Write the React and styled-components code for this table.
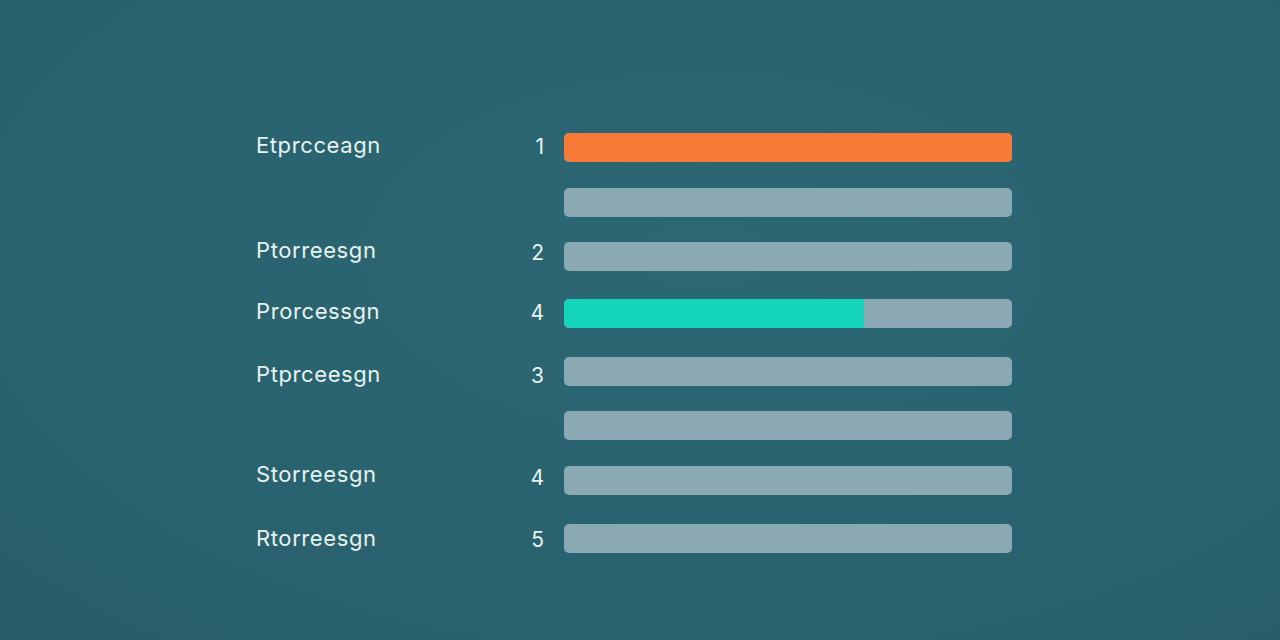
import React from 'react'
import styled, { createGlobalStyle } from 'styled-components'

const GlobalStyle = createGlobalStyle`
  html, body {
    margin: 0;
    padding: 0;
    background: #2a6370;
  }
`

// top = space above the row, dy / ndy = small vertical nudge of label / number
const rows = [
  { label: 'Etprcceagn', num: '1', fill: 100, color: '#f77b37', top: 0, dy: 0, ndy: 0 },
  { label: '', num: '', fill: 0, top: 26 },
  { label: 'Ptorreesgn', num: '2', fill: 0, top: 25, dy: -4, ndy: -3 },
  { label: 'Prorcessgn', num: '4', fill: 67, color: '#14d4b9', top: 28, dy: 0, ndy: 0 },
  { label: 'Ptprceesgn', num: '3', fill: 0, top: 29, dy: 5, ndy: 5 },
  { label: '', num: '', fill: 0, top: 25 },
  { label: 'Storreesgn', num: '4', fill: 0, top: 26, dy: -4, ndy: -2 },
  { label: 'Rtorreesgn', num: '5', fill: 0, top: 29, dy: 2, ndy: 2 },
]

function Chart() {
  return (
    <Page>
      <GlobalStyle />
      <List>
        {rows.map((r, i) => (
          <Row key={i} $top={r.top}>
            <Label $dy={r.dy || 0}>{r.label}</Label>
            <Num $dy={r.ndy || 0}>{r.num}</Num>
            <Track>
              {r.fill > 0 && <Fill $color={r.color} style={{ width: r.fill + '%' }} />}
            </Track>
          </Row>
        ))}
      </List>
    </Page>
  )
}

export default function App() {
  return <Chart />
}

const Page = styled.div`
  width: 1280px;
  height: 640px;
  box-sizing: border-box;
  padding: 133px 0 0 256px;
  background: radial-gradient(ellipse at 55% 40%, #2c6774 0%, #2a6370 55%, #285d6a 100%);
  font-family: Inter, "Liberation Sans", sans-serif;
  color: #e8f2f2;
`

const List = styled.div`
  display: flex;
  flex-direction: column;
`

const Row = styled.div`
  display: flex;
  align-items: center;
  height: 29px;
  margin-top: ${p => p.$top}px;
`

const Label = styled.div`
  width: 250px;
  font-size: 22px;
  line-height: 29px;
  letter-spacing: 0.6px;
  position: relative;
  top: ${p => p.$dy - 2}px;
`

const Num = styled.div`
  width: 40px;
  text-align: right;
  padding-right: 2px;
  box-sizing: border-box;
  font-size: 21px;
  line-height: 29px;
  position: relative;
  top: ${p => p.$dy - 1}px;
`

const Track = styled.div`
  width: 448px;
  height: 29px;
  margin-left: 18px;
  border-radius: 5px;
  background: #8aa9b3;
  overflow: hidden;
  display: flex;
`

const Fill = styled.div`
  height: 100%;
  background: ${p => p.$color};
  border-radius: 5px 0 0 5px;
`
